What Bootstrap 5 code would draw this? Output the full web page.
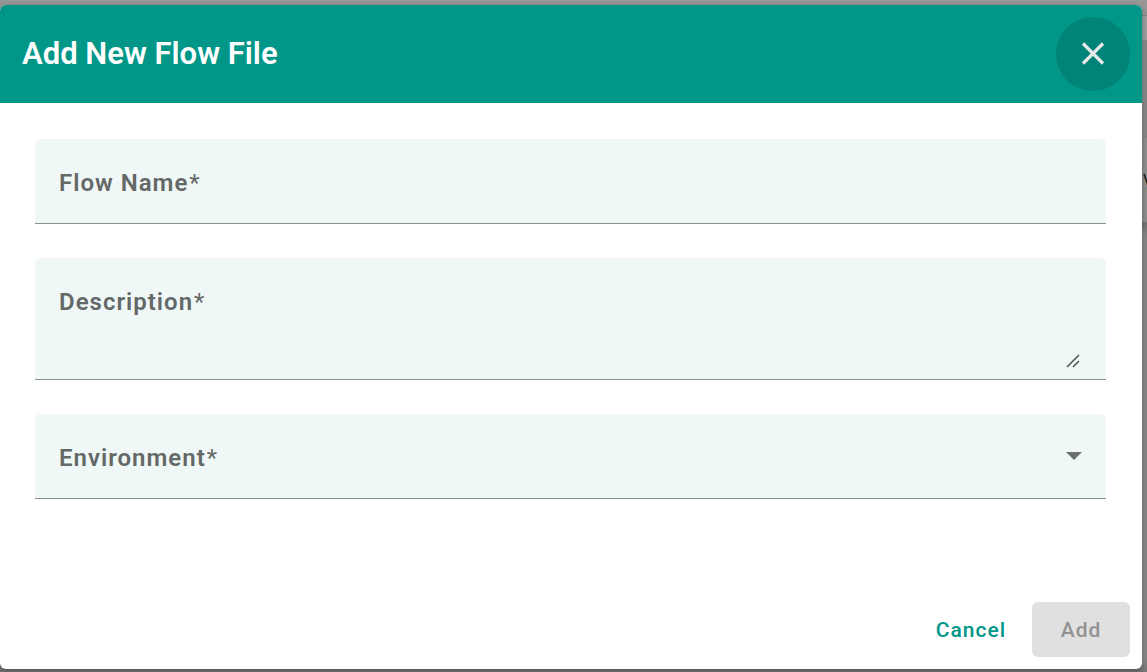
<!DOCTYPE html>
<html lang="en">
<head>
<meta charset="utf-8">
<meta name="viewport" content="width=device-width, initial-scale=1">
<title>Add New Flow File</title>
<link href="https://cdn.jsdelivr.net/npm/bootstrap@5.3.0/dist/css/bootstrap.min.css" rel="stylesheet">
<style>
  body { font-family: Roboto, "Liberation Sans", sans-serif; background: #959595; }
  .page-shell { padding: 5px 5px 3px 0; background: linear-gradient(#979797 0, #979797 75%, #777 100%); }
  /* dimmed page behind the dialog */
  .behind { top: 0; right: 0; width: 12px; height: 100%; background: #929292; box-shadow: inset 0 -6px 6px #777; }
  .behind-bar { height: 40px; background: linear-gradient(#979797 15px, #858585 15px, #858585 16px, #a0a0a0 16px); }
  .behind-card { top: 138px; width: 100%; height: 85px; background: #8f9190; border-bottom: 1px solid #7d7d7d; box-shadow: 0 5px 10px #666; padding-top: 30px; padding-left: 8px; font-size: 16px; line-height: 26px; color: #111; }
  .dialog-box { border-radius: 6px; box-shadow: 0 2px 6px rgba(0,0,0,.35); }
  .dialog-head { background: #009688; height: 98px; padding: 0 12px 0 22px; }
  .dialog-title { font-size: 31px; line-height: 40px; font-weight: 600; }
  .close-btn { width: 74px; height: 74px; background: #008478; border: 0; }
  .dialog-content { padding: 36px; padding-left: 35px; gap: 34px; }
  .field-box { background: #eff8f7; border-bottom: 1px solid #8a908f; border-radius: 6px 6px 0 0; grid-template-columns: 100%; }
  .field-box > * { grid-area: 1 / 1; }
  .field-label { padding: 29px 24px 0; font-size: 24px; line-height: 30px; letter-spacing: 1px; font-weight: 600; color: #646867; pointer-events: none; z-index: 1; }
  .field-label span { font-weight: 400; margin-left: 1px; }
  .field-input { height: 84px; padding: 28px 24px; font-size: 24px; line-height: 28px; border: 0; background-color: transparent; border-radius: 6px 6px 0 0; }
  .field-area { height: 121px; resize: none; }
  .field-select { background-image: none; }
  .field-input:focus { background-color: transparent; box-shadow: none; }
  .grip, .caret { place-self: end; margin: 0 26px 11px; pointer-events: none; }
  .caret { align-self: center; margin: 0 24px; }
  .dialog-foot { padding: 12px; gap: 12px; }
  .foot-btn { height: 55px; font-size: 21px; line-height: 28px; letter-spacing: 1px; font-weight: 500; border: 0; border-radius: 6px; padding: 0 14px; }
  .cancel-btn, .cancel-btn:hover { color: #009688; }
  .add-btn, .add-btn:disabled { width: 98px; background: #e0e0e0; color: #929292; opacity: 1; }
</style>
</head>
<body>
<div class="page-shell position-relative min-vh-100 d-flex overflow-hidden">
  <div class="behind position-absolute" aria-hidden="true">
    <div class="behind-bar"></div>
    <div class="behind-card position-absolute overflow-hidden">V</div>
  </div>
  <main class="dialog-box position-relative flex-grow-1 d-flex flex-column bg-white overflow-hidden" role="dialog" aria-labelledby="dialogTitle">
    <header class="dialog-head d-flex align-items-center justify-content-between">
      <h1 class="dialog-title text-white m-0" id="dialogTitle">Add New Flow File</h1>
      <button type="button" class="close-btn rounded-circle p-0 d-flex align-items-center justify-content-center" aria-label="Close">
        <svg width="24" height="24" viewBox="0 0 24 24" fill="none" stroke="#e8e8e8" stroke-width="3.2"><path d="M2 1.5 22 21.5M22 1.5 2 21.5"/></svg>
      </button>
    </header>
    <form class="flex-grow-1 d-flex flex-column">
      <div class="dialog-content flex-grow-1 d-flex flex-column">
        <div class="field-box d-grid">
          <label class="field-label" for="flowName">Flow Name<span>*</span></label>
          <input class="form-control field-input" id="flowName" type="text" required>
        </div>
        <div class="field-box d-grid">
          <label class="field-label" for="description">Description<span>*</span></label>
          <textarea class="form-control field-input field-area" id="description" required></textarea>
          <svg class="grip" width="14" height="14" viewBox="0 0 14 14" fill="none" stroke="#4d5150" stroke-width="1.5"><path d="M1 13 13 1M7 13 13 7"/></svg>
        </div>
        <div class="field-box d-grid">
          <label class="field-label" for="environment">Environment<span>*</span></label>
          <select class="form-select field-input field-select" id="environment" required><option value="" selected></option></select>
          <svg class="caret" width="16" height="8" viewBox="0 0 16 8"><path d="M0 0H16L8 8Z" fill="#6c7170"/></svg>
        </div>
      </div>
      <footer class="dialog-foot d-flex justify-content-end">
        <button type="button" class="btn foot-btn cancel-btn">Cancel</button>
        <button type="submit" class="btn foot-btn add-btn" disabled>Add</button>
      </footer>
    </form>
  </main>
</div>
<script src="https://cdn.jsdelivr.net/npm/bootstrap@5.3.0/dist/js/bootstrap.bundle.min.js"></script>
</body>
</html>
